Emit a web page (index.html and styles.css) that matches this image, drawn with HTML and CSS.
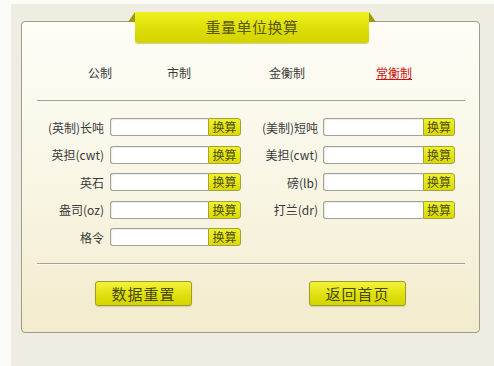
FILE: index.html
```html
<!DOCTYPE html>
<html lang="zh-CN">
<head>
<meta charset="utf-8">
<title>重量单位换算</title>
<link rel="stylesheet" href="styles.css">
</head>
<body>
<div class="page">
  <div class="card">
    <div class="tab">重量单位换算</div>
    <div class="systems">
      <a class="sys">公制</a>
      <a class="sys">市制</a>
      <a class="sys">金衡制</a>
      <a class="sys active">常衡制</a>
    </div>
    <div class="rule"></div>
    <div class="grid">
      <div class="row left"><label>(英制)长吨</label><span class="field"></span><button class="calc">换算</button></div>
      <div class="row right"><label>(美制)短吨</label><span class="field"></span><button class="calc">换算</button></div>
      <div class="row left"><label>英担(cwt)</label><span class="field"></span><button class="calc">换算</button></div>
      <div class="row right"><label>美担(cwt)</label><span class="field"></span><button class="calc">换算</button></div>
      <div class="row left"><label>英石</label><span class="field"></span><button class="calc">换算</button></div>
      <div class="row right"><label>磅(lb)</label><span class="field"></span><button class="calc">换算</button></div>
      <div class="row left"><label>盎司(oz)</label><span class="field"></span><button class="calc">换算</button></div>
      <div class="row right"><label>打兰(dr)</label><span class="field"></span><button class="calc">换算</button></div>
      <div class="row left"><label>格令</label><span class="field"></span><button class="calc">换算</button></div>
    </div>
    <div class="rule rule2"></div>
    <div class="actions">
      <button class="big">数据重置</button>
      <button class="big">返回首页</button>
    </div>
  </div>
</div>
</body>
</html>
```

FILE: styles.css
```css
* { box-sizing: border-box; }
html, body { margin: 0; padding: 0; background: #fbfbf8; }
body {
  width: 494px; height: 366px; overflow: hidden;
  font-family: "DejaVu Sans", "Noto Sans CJK SC", sans-serif;
  font-size: 12px; color: #333;
}
.page {
  margin: 4px 0 0 11px;
  height: 362px;
  background: #efece2;
  padding: 17px 0 0 10px;
}
.card {
  width: 459px;
  height: 312px;
  border: 1px solid #9e9c8a;
  border-radius: 4px;
  background: linear-gradient(#fefdf6, #f9f6e6 50%, #f2ebcc);
  padding: 0 14px 0 15px;
}
.tab {
  position: relative;
  width: 234px;
  height: 31px;
  margin: -10px auto 0;
  left: 1px;
  background: linear-gradient(#eef21e, #dcdc06 60%, #d2d200);
  border-radius: 0 0 3px 3px;
  box-shadow: 0 1px 1px rgba(120,120,0,0.35);
  text-align: center;
  font-family: "Noto Sans CJK SC", sans-serif;
  font-size: 15px; line-height: 30px;
  color: #5a5a0c;
  letter-spacing: 0.5px;
}
.tab::before, .tab::after {
  content: ""; position: absolute; top: 0;
  width: 7px; height: 10px;
  background: #9a9c10;
}
.tab::before { left: -7px; clip-path: polygon(100% 0, 100% 100%, 0 100%); }
.tab::after { right: -7px; clip-path: polygon(0 0, 100% 100%, 0 100%); }
.systems {
  display: grid;
  grid-template-columns: 79px 102px 107px auto;
  padding-left: 51px;
  margin-top: 22px;
  height: 16px; line-height: 16px;
  font-family: "Noto Sans CJK SC", sans-serif;
  font-size: 12px;
}
.sys { color: #3a3a3a; }
.sys.active { color: #cc1111; text-decoration: underline; }
.rule {
  margin-top: 19px;
  height: 2px;
  border-top: 1px solid #a7a38e;
  border-bottom: 1px solid #fbf9ef;
}
.grid {
  margin-top: 16px;
  display: grid;
  grid-template-columns: 213px 216px;
  row-gap: 9.5px;
}
.row { display: flex; align-items: center; height: 18px; }
.row label {
  text-align: right;
  font-family: "Noto Sans CJK SC", sans-serif;
  font-size: 12px; color: #3a3a3a;
  white-space: nowrap;
}
.left label { width: 67px; margin-right: 6px; }
.right label { width: 68px; margin-right: 5px; }
.field {
  height: 18px;
  background: #fff;
  border: 1px solid #a4a294;
  border-right: none;
  border-radius: 3px 0 0 3px;
  box-shadow: inset 1px 1px 1px rgba(0,0,0,0.08);
}
.left .field { width: 98px; }
.right .field { width: 100px; }
.calc {
  height: 18px;
  padding: 0;
  border: 1px solid #a4a040;
  border-radius: 0 3px 3px 0;
  background: linear-gradient(#eef22a, #dada00);
  font-family: "Noto Sans CJK SC", sans-serif;
  font-size: 12px; line-height: 16px;
  color: #4e4e18;
}
.left .calc { width: 33px; }
.right .calc { width: 32px; }
.rule2 { margin-top: 17px; }
.actions {
  display: flex;
  margin-top: 16px;
  padding-left: 58px;
}
.big {
  width: 97px; height: 25px;
  padding: 0;
  border: 1px solid #a09a30;
  border-radius: 3px;
  background: linear-gradient(#f2f43a, #e0e010 55%, #d4d400);
  box-shadow: 0 1px 1px rgba(120,120,0,0.25);
  font-family: "Noto Sans CJK SC", sans-serif;
  font-size: 15px; line-height: 23px;
  letter-spacing: 1px;
  color: #48480c;
}
.big + .big { margin-left: 117px; }
```
